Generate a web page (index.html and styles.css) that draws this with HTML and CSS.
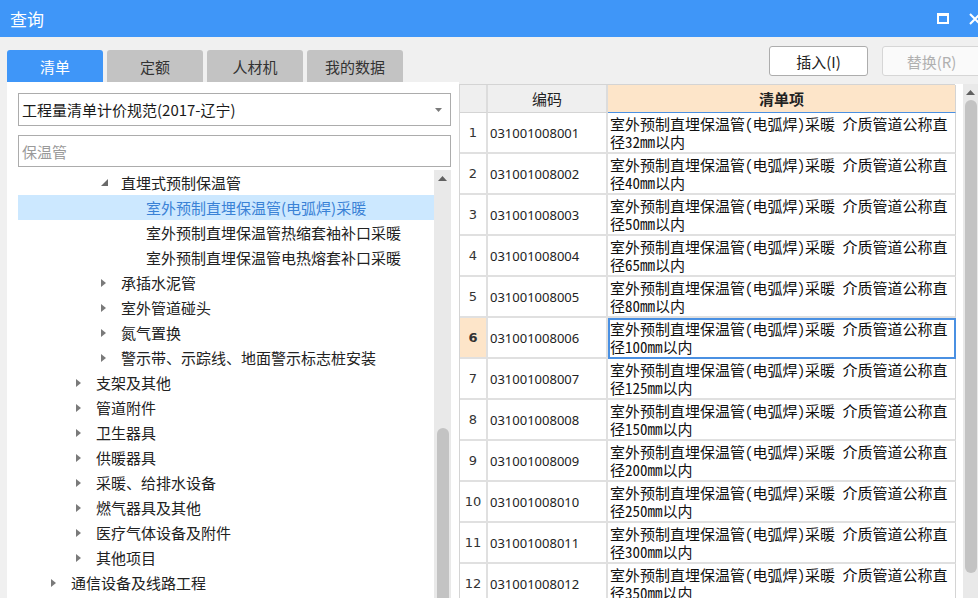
FILE: index.html
```html
<!DOCTYPE html>
<html lang="zh-CN">
<head>
<meta charset="utf-8">
<title>查询</title>
<link rel="stylesheet" href="styles.css">
</head>
<body>
<div class="titlebar">
  <div class="title">查询</div>
  <svg class="win-max" width="12" height="11" viewBox="0 0 12 11"><rect x="1" y="1.5" width="10" height="8.5" fill="none" stroke="#fff" stroke-width="2"/><rect x="0" y="0" width="12" height="3" fill="#fff"/></svg>
  <svg class="win-close" width="12" height="12" viewBox="0 0 12 12"><path d="M1 1L11 11M11 1L1 11" stroke="#fff" stroke-width="2"/></svg>
</div>
<div class="main">
  <div class="left">
    <div class="tabs">
      <div class="tab active">清单</div>
      <div class="tab">定额</div>
      <div class="tab">人材机</div>
      <div class="tab">我的数据</div>
    </div>
    <div class="panel">
      <div class="select">
        <span class="select-text">工程量清单计价规范(2017-辽宁)</span>
        <svg width="7" height="4" viewBox="0 0 7 4"><polygon points="0,0 7,0 3.5,4" fill="#7a7a7a"/></svg>
      </div>
      <div class="search">保温管</div>
      <div class="tree">
        <div class="tree-list">
          <div class="node l3"><span class="tog"><svg width="7" height="7" viewBox="0 0 7 7"><polygon points="7,0 7,7 0,7" fill="#6a6a6a"/></svg></span><span>直埋式预制保温管</span></div>
          <div class="node l4 sel"><span>室外预制直埋保温管(电弧焊)采暖</span></div>
          <div class="node l4"><span>室外预制直埋保温管热缩套袖补口采暖</span></div>
          <div class="node l4"><span>室外预制直埋保温管电热熔套补口采暖</span></div>
          <div class="node l3"><span class="tog"><svg width="5" height="8" viewBox="0 0 5 8"><polygon points="0,0 5,4 0,8" fill="#7a7a7a"/></svg></span><span>承插水泥管</span></div>
          <div class="node l3"><span class="tog"><svg width="5" height="8" viewBox="0 0 5 8"><polygon points="0,0 5,4 0,8" fill="#7a7a7a"/></svg></span><span>室外管道碰头</span></div>
          <div class="node l3"><span class="tog"><svg width="5" height="8" viewBox="0 0 5 8"><polygon points="0,0 5,4 0,8" fill="#7a7a7a"/></svg></span><span>氮气置换</span></div>
          <div class="node l3"><span class="tog"><svg width="5" height="8" viewBox="0 0 5 8"><polygon points="0,0 5,4 0,8" fill="#7a7a7a"/></svg></span><span>警示带、示踪线、地面警示标志桩安装</span></div>
          <div class="node l2"><span class="tog"><svg width="5" height="8" viewBox="0 0 5 8"><polygon points="0,0 5,4 0,8" fill="#7a7a7a"/></svg></span><span>支架及其他</span></div>
          <div class="node l2"><span class="tog"><svg width="5" height="8" viewBox="0 0 5 8"><polygon points="0,0 5,4 0,8" fill="#7a7a7a"/></svg></span><span>管道附件</span></div>
          <div class="node l2"><span class="tog"><svg width="5" height="8" viewBox="0 0 5 8"><polygon points="0,0 5,4 0,8" fill="#7a7a7a"/></svg></span><span>卫生器具</span></div>
          <div class="node l2"><span class="tog"><svg width="5" height="8" viewBox="0 0 5 8"><polygon points="0,0 5,4 0,8" fill="#7a7a7a"/></svg></span><span>供暖器具</span></div>
          <div class="node l2"><span class="tog"><svg width="5" height="8" viewBox="0 0 5 8"><polygon points="0,0 5,4 0,8" fill="#7a7a7a"/></svg></span><span>采暖、给排水设备</span></div>
          <div class="node l2"><span class="tog"><svg width="5" height="8" viewBox="0 0 5 8"><polygon points="0,0 5,4 0,8" fill="#7a7a7a"/></svg></span><span>燃气器具及其他</span></div>
          <div class="node l2"><span class="tog"><svg width="5" height="8" viewBox="0 0 5 8"><polygon points="0,0 5,4 0,8" fill="#7a7a7a"/></svg></span><span>医疗气体设备及附件</span></div>
          <div class="node l2"><span class="tog"><svg width="5" height="8" viewBox="0 0 5 8"><polygon points="0,0 5,4 0,8" fill="#7a7a7a"/></svg></span><span>其他项目</span></div>
          <div class="node l1"><span class="tog"><svg width="5" height="8" viewBox="0 0 5 8"><polygon points="0,0 5,4 0,8" fill="#7a7a7a"/></svg></span><span>通信设备及线路工程</span></div>
        </div>
        <div class="vscroll tree-scroll">
          <div class="arrow"><svg width="9" height="5" viewBox="0 0 9 5"><polygon points="0,5 9,5 4.5,0" fill="#606060"/></svg></div>
          <div class="thumb tree-thumb"></div>
        </div>
      </div>
    </div>
  </div>
  <div class="right">
    <div class="toolbar">
      <div class="btn">插入(I)</div>
      <div class="btn disabled">替换(R)</div>
    </div>
    <div class="grid-area">
      <div class="grid">
        <div class="hd num"></div>
        <div class="hd code">编码</div>
        <div class="hd item">清单项</div>

        <div class="c num">1</div><div class="c code">031001008001</div><div class="c item">室外预制直埋保温管(电弧焊)采暖 介质管道公称直<br>径32mm以内</div>
        <div class="c num">2</div><div class="c code">031001008002</div><div class="c item">室外预制直埋保温管(电弧焊)采暖 介质管道公称直<br>径40mm以内</div>
        <div class="c num">3</div><div class="c code">031001008003</div><div class="c item">室外预制直埋保温管(电弧焊)采暖 介质管道公称直<br>径50mm以内</div>
        <div class="c num">4</div><div class="c code">031001008004</div><div class="c item">室外预制直埋保温管(电弧焊)采暖 介质管道公称直<br>径65mm以内</div>
        <div class="c num">5</div><div class="c code">031001008005</div><div class="c item">室外预制直埋保温管(电弧焊)采暖 介质管道公称直<br>径80mm以内</div>
        <div class="c num cur">6</div><div class="c code">031001008006</div><div class="c item focus">室外预制直埋保温管(电弧焊)采暖 介质管道公称直<br>径100mm以内</div>
        <div class="c num">7</div><div class="c code">031001008007</div><div class="c item">室外预制直埋保温管(电弧焊)采暖 介质管道公称直<br>径125mm以内</div>
        <div class="c num">8</div><div class="c code">031001008008</div><div class="c item">室外预制直埋保温管(电弧焊)采暖 介质管道公称直<br>径150mm以内</div>
        <div class="c num">9</div><div class="c code">031001008009</div><div class="c item">室外预制直埋保温管(电弧焊)采暖 介质管道公称直<br>径200mm以内</div>
        <div class="c num">10</div><div class="c code">031001008010</div><div class="c item">室外预制直埋保温管(电弧焊)采暖 介质管道公称直<br>径250mm以内</div>
        <div class="c num">11</div><div class="c code">031001008011</div><div class="c item">室外预制直埋保温管(电弧焊)采暖 介质管道公称直<br>径300mm以内</div>
        <div class="c num">12</div><div class="c code">031001008012</div><div class="c item">室外预制直埋保温管(电弧焊)采暖 介质管道公称直<br>径350mm以内</div>
      </div>
      <div class="vscroll grid-scroll">
        <div class="arrow"><svg width="9" height="5" viewBox="0 0 9 5"><polygon points="0,5 9,5 4.5,0" fill="#606060"/></svg></div>
        <div class="thumb grid-thumb"></div>
      </div>
    </div>
  </div>
</div>
</body>
</html>
```

FILE: styles.css
```css
* { box-sizing: border-box; margin: 0; padding: 0; }
html, body { width: 978px; height: 598px; overflow: hidden; }
body {
  background: #f0f0f0;
  font-family: "Noto Sans CJK SC", "Noto Sans", sans-serif;
  font-size: 15px;
  color: #1e1e1e;
}

.titlebar {
  height: 37px;
  background: #3f96f8;
  display: flex;
  align-items: center;
  padding-left: 10px;
  color: #fff;
  font-size: 17px;
}
.title { flex: 1; }
.win-max { margin-right: 20px; }
.win-close { margin-right: -3px; }

.main { display: flex; height: 561px; padding-left: 7px; }

.left { width: 452px; display: flex; flex-direction: column; }
.tabs { display: flex; gap: 4px; margin-top: 13px; height: 32px; flex-shrink: 0; }
.tab {
  width: 96px;
  background: #c3c3c3;
  border-radius: 3px 3px 0 0;
  display: flex;
  align-items: center;
  justify-content: center;
  color: #333;
}
.tab.active { background: #3f96f8; color: #fff; }

.panel {
  flex: 1;
  min-height: 0;
  background: #fff;
  padding: 11px 8px 0 11px;
  display: flex;
  flex-direction: column;
}
.select {
  height: 33px;
  flex-shrink: 0;
  border: 1px solid #acacac;
  display: flex;
  align-items: center;
  padding: 0 8px 0 3px;
  color: #1a1a1a;
}
.select-text { flex: 1; }
.search {
  height: 32px;
  flex-shrink: 0;
  margin-top: 9px;
  border: 1px solid #acacac;
  display: flex;
  align-items: center;
  padding-left: 3px;
  color: #9a9a9a;
}

.tree { flex: 1; min-height: 0; display: flex; margin-top: 3px; overflow: hidden; }
.tree-list { flex: 1; }
.node {
  height: 25px;
  display: flex;
  align-items: center;
  white-space: nowrap;
  color: #222;
}
.tog { width: 20px; display: flex; align-items: center; }
.l1 { padding-left: 33px; }
.l2 { padding-left: 58px; }
.l3 { padding-left: 83px; }
.l4 { padding-left: 128px; }
.node.sel { background: #cce8ff; color: #3a82d6; }

.vscroll { background: #e9e9e9; display: flex; flex-direction: column; align-items: center; }
.tree-scroll { width: 17px; }
.arrow { height: 16px; flex-shrink: 0; display: flex; align-items: center; justify-content: center; }
.thumb { width: 12px; background: #c3c3c3; border-radius: 6px; flex-shrink: 0; }
.tree-thumb { margin-top: 242px; height: 220px; }

.right { flex: 1; min-width: 0; display: flex; flex-direction: column; }
.toolbar { height: 47px; flex-shrink: 0; display: flex; gap: 14px; padding: 9px 0 0 310px; }
.btn {
  width: 99px;
  height: 30px;
  flex-shrink: 0;
  border: 1px solid #adadad;
  border-radius: 3px;
  background: #fff;
  display: flex;
  align-items: center;
  justify-content: center;
  color: #222;
}
.btn.disabled { border-color: #d6d6d6; background: #fafafa; color: #b0b0b0; }

.grid-area { flex: 1; min-height: 0; display: flex; background: #fff; overflow: hidden; }
.grid {
  width: 496px;
  display: grid;
  grid-template-columns: 28px 120px 348px;
  grid-template-rows: 28px repeat(12, 41px);
  border-left: 1px solid #d4d4d4;
  border-top: 1px solid #d4d4d4;
  align-content: start;
}
.hd {
  background: #efefef;
  border-right: 2px solid #dcdcdc;
  border-bottom: 1px solid #d4d4d4;
  display: flex;
  align-items: center;
  justify-content: center;
  color: #222;
}
.hd.item { background: #fde5c9; font-weight: bold; border-bottom: 1px solid #4a90e2; border-right: 1px solid #d4d4d4; }
.c {
  border-right: 2px solid #e0e0e0;
  border-bottom: 2px solid #e0e0e0;
  display: flex;
  align-items: center;
}
.c.num {
  justify-content: center;
  font-family: "DejaVu Sans", sans-serif;
  font-size: 13px;
  color: #333;
  background: #fff;
}
.c.num.cur { background: #fde5c9; font-weight: bold; }
.c.code { padding-left: 2px; font-family: "Noto Sans", sans-serif; font-size: 13px; color: #222; }
.c.item {
  align-items: flex-start;
  padding: 2px 0 0 2px;
  line-height: 18px;
  color: #111;
  font-feature-settings: "hwid";
  white-space: nowrap;
  border-right: 1px solid #d4d4d4;
}
.c.item.focus { outline: 2px solid #4a90e2; outline-offset: -2px; }

.grid-scroll { width: 15px; margin-left: 8px; align-items: flex-start; }
.grid-scroll .arrow { width: 15px; }
.grid-thumb { margin-left: 2px; margin-top: 0; height: 473px; }
```
